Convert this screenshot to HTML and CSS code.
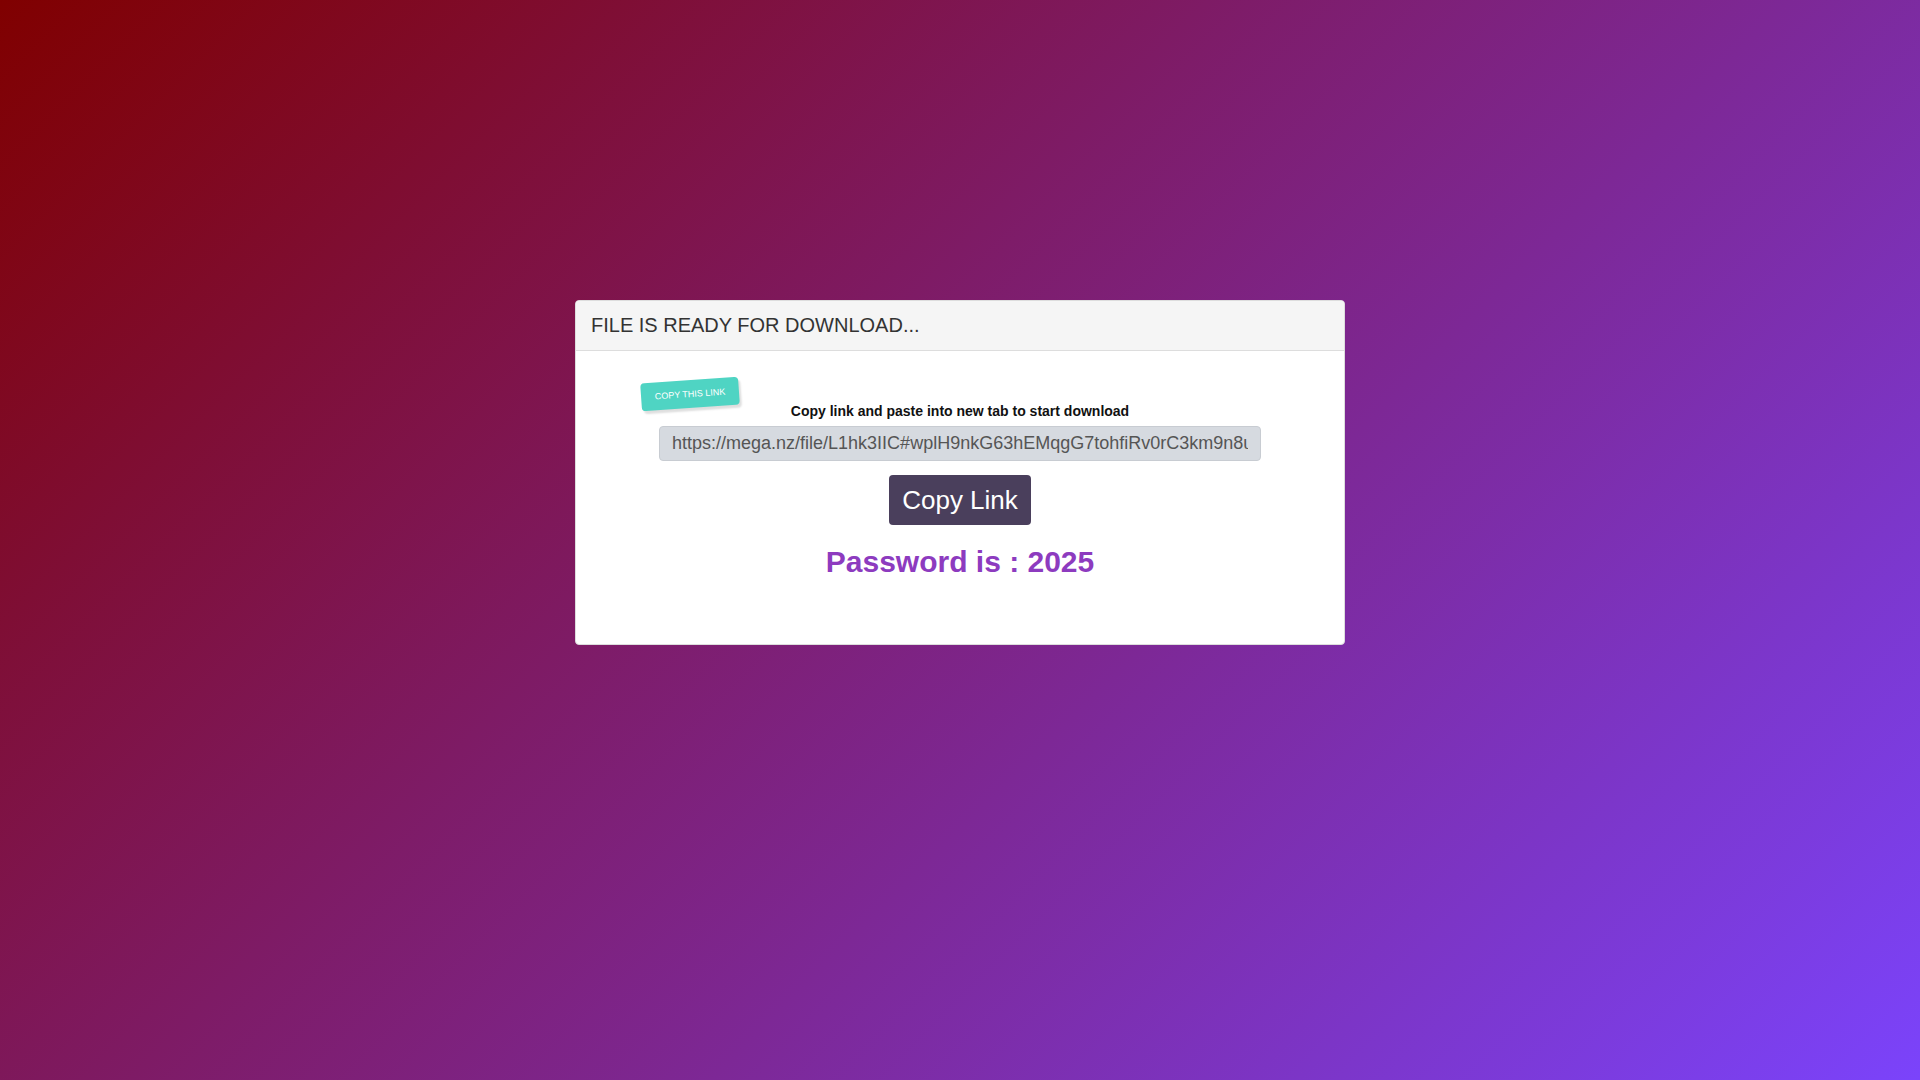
FILE: index.html
```html
<!DOCTYPE html>
<html lang="en">
<head>
<meta charset="utf-8">
<title>File is ready for download</title>
<link rel="stylesheet" href="styles.css">
</head>
<body>
<main class="page">
  <section class="card">
    <header class="card-head">FILE IS READY FOR DOWNLOAD...</header>
    <div class="card-body">
      <span class="ribbon">COPY THIS LINK</span>
      <label class="hint" for="link">Copy link and paste into new tab to start download</label>
      <input id="link" class="link-input" type="text" readonly value="https://mega.nz/file/L1hk3IIC#wplH9nkG63hEMqgG7tohfiRv0rC3km9n8u">
      <button class="copy-btn" type="button">Copy Link</button>
      <h3 class="password">Password is : 2025</h3>
    </div>
  </section>
</main>
</body>
</html>
```
FILE: styles.css
```css
html, body {
  margin: 0;
  padding: 0;
  height: 100%;
}
body {
  min-height: 100vh;
  background: linear-gradient(135deg, #800000 0%, #7b43fb 100%);
  font-family: "Liberation Sans", Arial, sans-serif;
}
.page {
  padding-top: 300px;
  display: flex;
  justify-content: center;
}
.card {
  width: 770px;
  box-sizing: border-box;
  background: #fff;
  border: 1px solid #ddd;
  border-radius: 4px;
  overflow: hidden;
}
.card-head {
  background: #f5f5f5;
  color: #333;
  font-size: 20px;
  line-height: 30px;
  padding: 9px 15px 10px;
  border-bottom: 1px solid #ddd;
}
.card-body {
  position: relative;
  padding: 50px 0 65px;
  display: flex;
  flex-direction: column;
  align-items: center;
}
.ribbon {
  position: absolute;
  left: 65px;
  top: 29px;
  width: 98px;
  height: 28px;
  line-height: 28px;
  text-align: center;
  background: #4fd4c3;
  color: #fff;
  font-size: 9px;
  border-radius: 4px;
  transform: rotate(-4deg);
  box-shadow: 2px 3px 2px rgba(0, 0, 0, 0.13);
}
.hint {
  display: block;
  font-size: 14px;
  font-weight: bold;
  line-height: 20px;
  color: #111;
  margin-bottom: 5px;
}
.link-input {
  width: 602px;
  height: 35px;
  box-sizing: border-box;
  padding: 0 12px;
  border: 1px solid #c8ccd2;
  border-radius: 4px;
  background: #d6dae0;
  color: #555;
  font-family: "Liberation Sans", Arial, sans-serif;
  font-size: 18px;
  outline: none;
}
.copy-btn {
  margin-top: 14px;
  height: 50px;
  padding: 0 13px;
  border: none;
  border-radius: 4px;
  background: #4a3f5c;
  color: #fff;
  font-family: "Liberation Sans", Arial, sans-serif;
  font-size: 26px;
  line-height: 50px;
  cursor: pointer;
}
.password {
  margin: 20px 0 0;
  font-size: 30px;
  line-height: 34px;
  font-weight: bold;
  color: #8d3bbf;
}
```
